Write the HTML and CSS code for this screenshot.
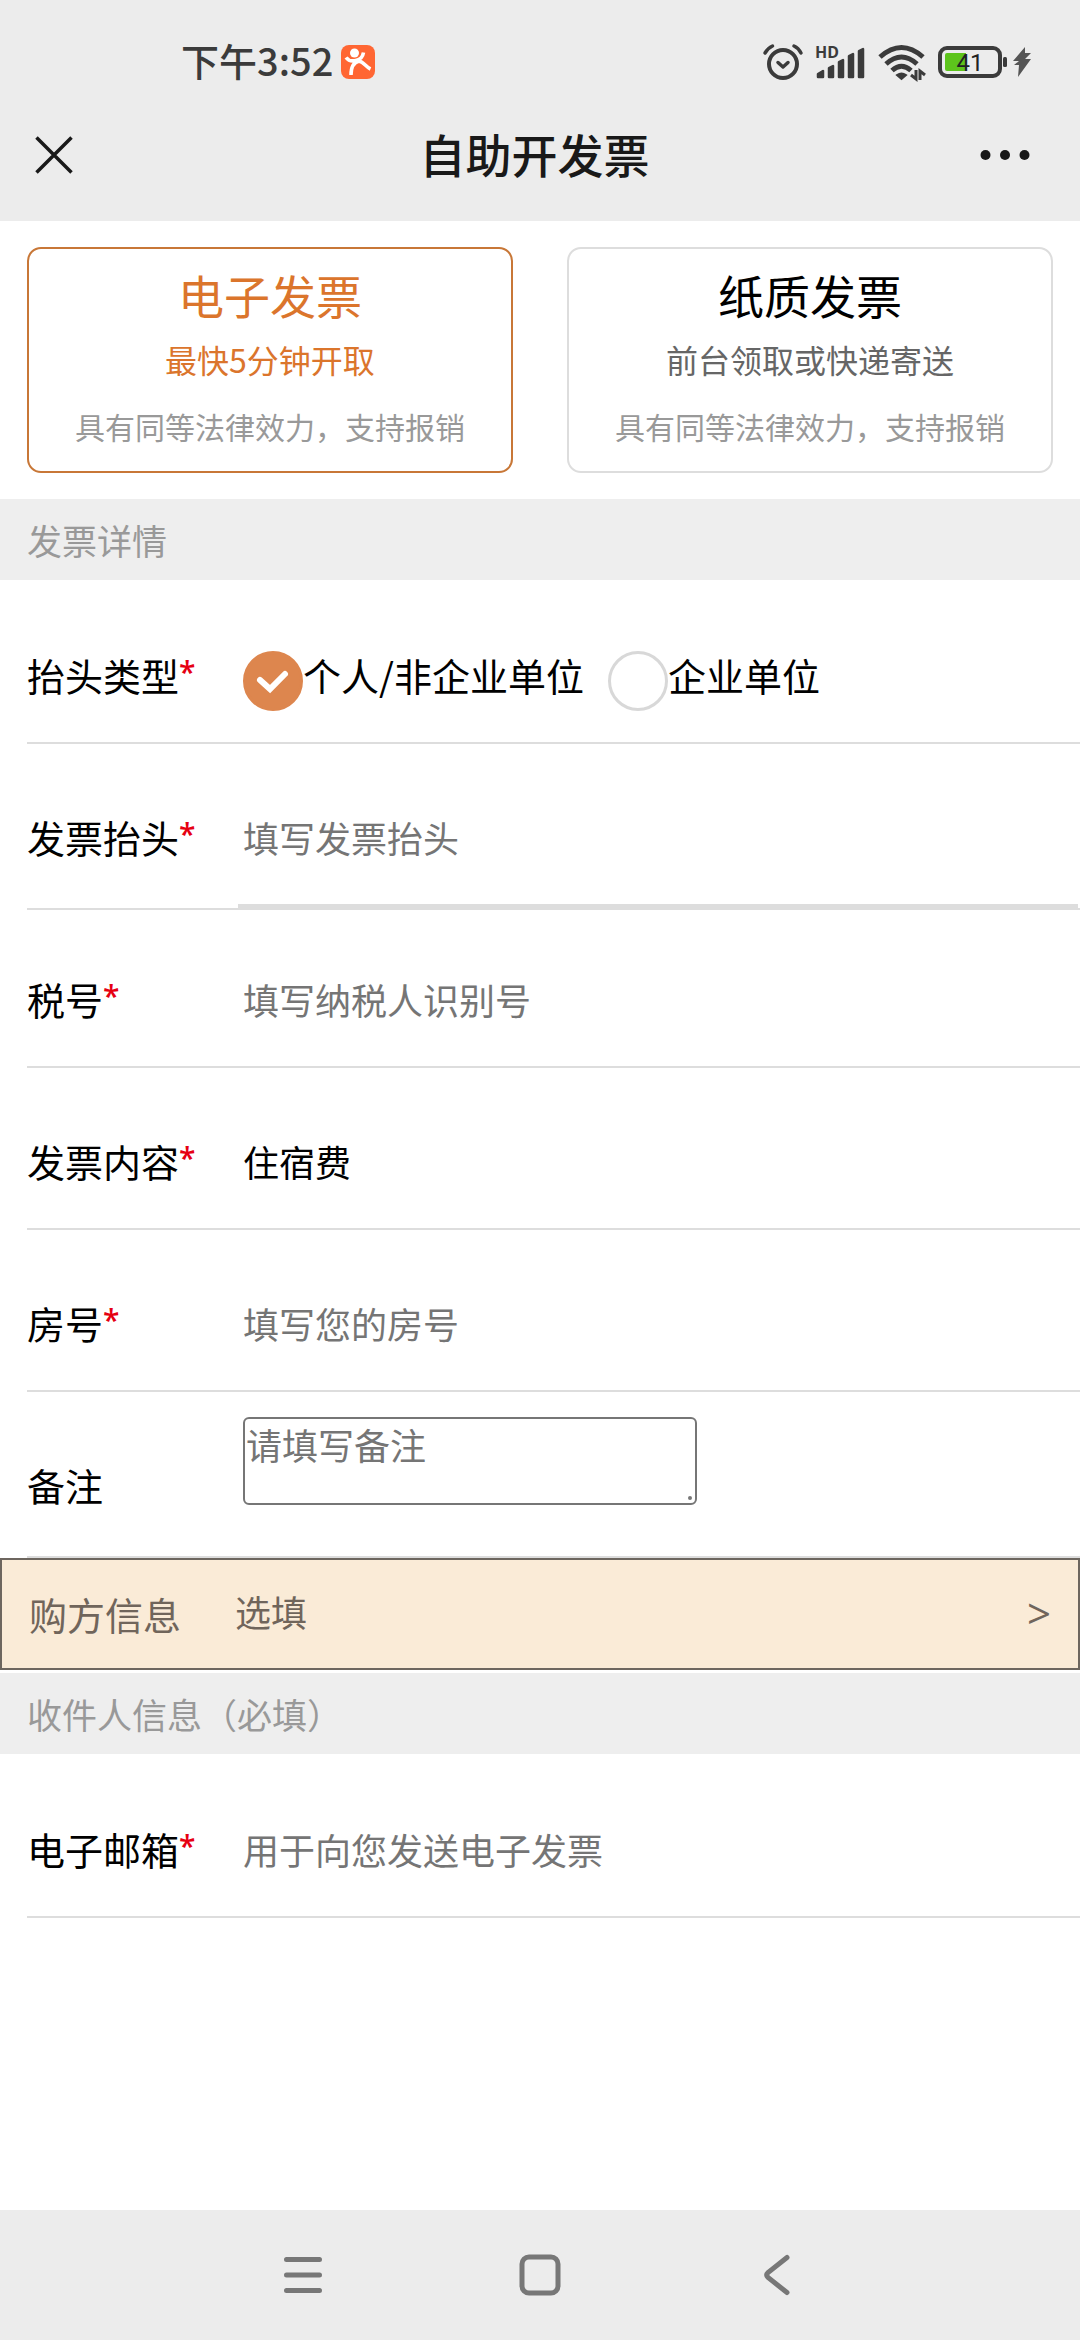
FILE: index.html
```
<!DOCTYPE html>
<html lang="zh-CN">
<head>
    <meta charset="UTF-8">
    <meta name="viewport" content="width=device-width, initial-scale=1.0">
    <title>自助开发票</title>
    <link rel="stylesheet" href="styles.css">
</head>
<body>
    <header class="top">
        <div class="status-bar">
            <div class="status-left">
                <span class="time">下午3:52</span>
                <svg width="34" height="34" viewBox="0 0 34 34">
                    <rect width="34" height="34" rx="8" fill="#ff6633"/>
                    <circle cx="13.500" cy="8" r="4.500" fill="#fff"/>
                    <path d="M5 12.500C9 18 21 17 22.500 7.500M10 30C10 21 14 17 18 16C23 17 25 22 29.500 24M14 17L20 16" fill="none" stroke="#fff" stroke-width="3.600"/>
                </svg>
            </div>
            <div class="status-right">
                <svg width="40" height="38" viewBox="0 0 40 38" fill="none" stroke="#3b3b3b" stroke-linecap="round" stroke-linejoin="round">
                    <circle cx="20" cy="21" r="14" stroke-width="4"/>
                    <path d="M15 19.500l5 4.500 5-4.500" stroke-width="3.500"/>
                    <path d="M2 10Q5 5 9.500 3M31 3Q35.500 5 38 10" stroke-width="3.500"/>
                </svg>
                <svg width="51" height="38" viewBox="0 0 51 38" fill="#3b3b3b">
                    <text x="0" y="15" class="hd">HD</text>
                    <path d="M3 34v-3l5-3v6zM14 34V25l4-2v11zM24 34V19l4-2v17zM34 34V13l4-2v23zM44 34V8l4-2v28z" stroke="#3b3b3b" stroke-width="2.500" stroke-linejoin="round"/>
                </svg>
                <svg width="48" height="38" viewBox="0 0 48 38" fill="none" stroke="#3b3b3b" stroke-width="5">
                    <path d="M2 14Q23.500-5 45 14M8 21Q23.500 7 39 21M14 27.500Q23.500 19 33 27.500"/>
                    <path d="M19 32q4.500-3 9 0l-4.500 4z" fill="#3b3b3b" stroke-width="2"/>
                    <path d="M38 27v9l-5-4M42 37v-9l5 4" stroke-width="3"/>
                </svg>
                <svg width="70" height="38" viewBox="0 0 70 38">
                    <rect x="2" y="5" width="60" height="28" rx="7" fill="none" stroke="#3b3b3b" stroke-width="4"/>
                    <path d="M9 10h19v18H9a2 2 0 0 1-2-2v-14a2 2 0 0 1 2-2z" fill="#5dc41c"/>
                    <rect x="65" y="14" width="4" height="10" rx="1.500" fill="#3b3b3b"/>
                    <text x="32" y="28" text-anchor="middle" class="level">41</text>
                </svg>
                <svg width="20" height="32" viewBox="0 0 20 32">
                    <path d="M13 1L1 15h6l-5 4h5L6 31 19 13h-6l6-6h-6z" fill="#555"/>
                </svg>
            </div>
        </div>
        <div class="title-bar">
            <button type="button" class="icon-btn close" aria-label="关闭">
                <svg width="38" height="38" viewBox="0 0 38 38" fill="none" stroke="#191919" stroke-width="3.500">
                    <path d="M1.500 1.500l35 35M36.500 1.500l-35 35"/>
                </svg>
            </button>
            <h1>自助开发票</h1>
            <button type="button" class="icon-btn" aria-label="更多">
                <svg width="50" height="12" viewBox="0 0 50 12" fill="#191919">
                    <circle cx="5.500" cy="6" r="5"/>
                    <circle cx="25" cy="6" r="5"/>
                    <circle cx="44.500" cy="6" r="5"/>
                </svg>
            </button>
        </div>
    </header>

    <main>
        <div class="cards">
            <button type="button" class="card active">
                <span class="card-title">电子发票</span>
                <span class="card-sub">最快5分钟开取</span>
                <span class="card-note">具有同等法律效力，支持报销</span>
            </button>
            <button type="button" class="card">
                <span class="card-title">纸质发票</span>
                <span class="card-sub">前台领取或快递寄送</span>
                <span class="card-note">具有同等法律效力，支持报销</span>
            </button>
        </div>

        <h2>发票详情</h2>
        <div class="rows">
            <div class="row">
                <span class="label">抬头类型<i>*</i></span>
                <div class="field radios">
                    <label class="radio">
                        <input type="radio" name="titleType" checked>
                        <svg width="60" height="60" viewBox="0 0 60 60">
                            <path d="M17 29l10 9 15-15" fill="none" stroke="#fff" stroke-width="6" stroke-linecap="round"/>
                        </svg>
                        个人/非企业单位
                    </label>
                    <label class="radio">
                        <input type="radio" name="titleType">
                        企业单位
                    </label>
                </div>
            </div>
            <div class="row current">
                <label class="label" for="title">发票抬头<i>*</i></label>
                <input class="field" type="text" id="title" placeholder="填写发票抬头">
            </div>
            <div class="row">
                <label class="label" for="taxNo">税号<i>*</i></label>
                <input class="field" type="text" id="taxNo" placeholder="填写纳税人识别号">
            </div>
            <div class="row">
                <label class="label" for="content">发票内容<i>*</i></label>
                <input class="field" type="text" id="content" value="住宿费" readonly>
            </div>
            <div class="row">
                <label class="label" for="room">房号<i>*</i></label>
                <input class="field" type="text" id="room" placeholder="填写您的房号">
            </div>
            <div class="row remark">
                <label class="label" for="remark">备注</label>
                <div class="textarea-box">
                    <textarea id="remark" placeholder="请填写备注"></textarea>
                </div>
            </div>
        </div>

        <button type="button" class="buyer">
            <span class="buyer-label">购方信息</span>
            <span class="buyer-value">选填</span>
            <span class="buyer-arrow">&gt;</span>
        </button>

        <h2>收件人信息（必填）</h2>
        <div class="rows">
            <div class="row">
                <label class="label" for="email">电子邮箱<i>*</i></label>
                <input class="field" type="email" id="email" placeholder="用于向您发送电子发票">
            </div>
        </div>
    </main>

    <nav class="nav">
        <button type="button" class="icon-btn" aria-label="菜单">
            <svg width="42" height="42" viewBox="0 0 42 42" fill="none" stroke="#777" stroke-width="5" stroke-linecap="round">
                <path d="M4.500 5.500h33M4.500 21h33M4.500 36.500h33"/>
            </svg>
        </button>
        <button type="button" class="icon-btn" aria-label="主页">
            <svg width="42" height="42" viewBox="0 0 42 42" fill="none" stroke="#777" stroke-width="5">
                <rect x="3" y="3" width="36" height="36" rx="7"/>
            </svg>
        </button>
        <button type="button" class="icon-btn" aria-label="返回">
            <svg width="42" height="42" viewBox="0 0 42 42" fill="none" stroke="#777" stroke-width="5" stroke-linecap="round">
                <path d="M31 3.500L12 18.500Q9.500 21 12 23.500L31 38.500"/>
            </svg>
        </button>
    </nav>
</body>
</html>
```
FILE: styles.css
```
* {
    box-sizing: border-box;
}

body {
    margin: 0;
    min-height: 100vh;
    display: flex;
    flex-direction: column;
    background-color: #fff;
    color: #000;
    font-family: "Noto Sans CJK SC", sans-serif;
    font-size: 38px;
}

button,
input,
textarea {
    font-family: inherit;
    border-radius: 0;
}

svg {
    display: block;
    flex: none;
    overflow: visible;
}

.icon-btn {
    padding: 0;
    border: none;
    background: none;
    cursor: pointer;
}

/* 顶部 */
.top {
    background-color: #ececec;
    padding-bottom: 28px;
}

.status-bar {
    display: flex;
    justify-content: space-between;
    align-items: center;
    height: 124px;
    padding: 0 48px 0 181px;
}

.status-left,
.status-right {
    display: flex;
    align-items: center;
}

.status-left {
    gap: 8px;
}

.time {
    padding-bottom: 4px;
    color: #3b3b3b;
    font-size: 38px;
    font-weight: 500;
    line-height: 50px;
}

.status-right {
    gap: 12px;
}

.status-right svg:last-child {
    margin-left: -8px;
}

.hd {
    font-family: "Noto Sans", sans-serif;
    font-size: 16px;
    font-weight: 700;
}

.level {
    font-family: Roboto, sans-serif;
    font-size: 24px;
    fill: #222;
}

.title-bar {
    display: flex;
    justify-content: space-between;
    align-items: center;
    height: 69px;
    padding: 0 50px 7px 35px;
}

.close {
    width: 54px;
}

h1 {
    margin: 0;
    padding-bottom: 4px;
    color: #191919;
    font-size: 46px;
    font-weight: 500;
    line-height: 62px;
}

/* 发票类型 */
.cards {
    display: grid;
    grid-template-columns: 1fr 1fr;
    gap: 54px;
    padding: 26px 27px;
}

.card {
    display: flex;
    flex-direction: column;
    align-items: center;
    height: 226px;
    padding: 14px 0;
    border: 2px solid #ddd;
    border-radius: 14px;
    background-color: #fff;
    color: #000;
    cursor: pointer;
}

.card-title {
    font-size: 46px;
    line-height: 62px;
}

.card-sub {
    color: #666;
    font-size: 32px;
    line-height: 68px;
}

.card-note {
    color: #999;
    font-size: 30px;
    line-height: 66px;
}

.card.active {
    border-color: #c87737;
}

.card.active .card-title,
.card.active .card-sub {
    color: #db752c;
}

h2 {
    margin: 0;
    padding: 0 27px;
    background-color: #eee;
    color: #999;
    font-size: 35px;
    font-weight: 400;
    line-height: 81px;
}

/* 表单 */
.rows {
    padding: 2px 0 0 27px;
}

.row {
    display: flex;
    align-items: flex-start;
    height: 162px;
    padding-top: 65px;
    border-bottom: 2px solid #ddd;
    line-height: 56px;
}

.label {
    flex: none;
    width: 211px;
}

.label i {
    color: #e60012;
    font-family: "Open Sans", sans-serif;
    font-size: 30px;
    font-style: normal;
    font-weight: 600;
    line-height: 30px;
    vertical-align: 8px;
}

.field {
    flex: 1;
    min-width: 0;
    padding: 0 5px;
}

input.field {
    height: 56px;
    border: none;
    outline: none;
    background: none;
    font-size: 36px;
    color: #000;
}

::placeholder {
    color: #757575;
    opacity: 1;
}

.row.current {
    height: 166px;
    margin-bottom: -4px;
}

.row.current .field {
    height: 101px;
    margin-right: 2px;
    padding-bottom: 39px;
    border-bottom: 6px solid #ddd;
}

.radios {
    display: flex;
    gap: 24px;
}

.radio {
    display: flex;
    position: relative;
    white-space: nowrap;
}

.radio input {
    appearance: none;
    width: 60px;
    height: 60px;
    margin: 4px 0 0;
    border: 3px solid #d8d8d8;
    border-radius: 50%;
}

.radio input:checked {
    border-color: #dd864e;
    background-color: #dd864e;
}

.radio svg {
    position: absolute;
    left: 0;
    top: 4px;
}

.row.remark {
    height: 166px;
}

.textarea-box {
    position: relative;
    width: 454px;
    margin: -40px 0 0 5px;
}

/* 右下角的拖动点 */
.textarea-box::after {
    content: "";
    position: absolute;
    right: 5px;
    bottom: 5px;
    width: 4px;
    height: 4px;
    border-radius: 50%;
    background-color: #777;
}

textarea {
    display: block;
    width: 100%;
    height: 88px;
    padding: 0 1px;
    border: 2px solid #767676;
    border-radius: 6px;
    outline: none;
    resize: none;
    font-size: 36px;
    line-height: 50px;
}

.buyer {
    display: flex;
    align-items: center;
    width: 100%;
    height: 112px;
    margin-bottom: 3px;
    padding: 0 27px 2px;
    border: 2px solid #6d665f;
    background-color: #faebd7;
    color: #70655b;
    font-size: 38px;
    text-align: left;
    cursor: pointer;
}

.buyer-label {
    width: 206px;
}

.buyer-value {
    flex: 1;
    padding-bottom: 4px;
    font-size: 36px;
}

.buyer-arrow {
    font-family: "Open Sans", sans-serif;
    font-size: 42px;
    line-height: 50px;
}

/* 底部导航 */
.nav {
    display: flex;
    justify-content: center;
    align-items: center;
    gap: 195px;
    height: 130px;
    margin-top: auto;
    background-color: #ececec;
}
```
